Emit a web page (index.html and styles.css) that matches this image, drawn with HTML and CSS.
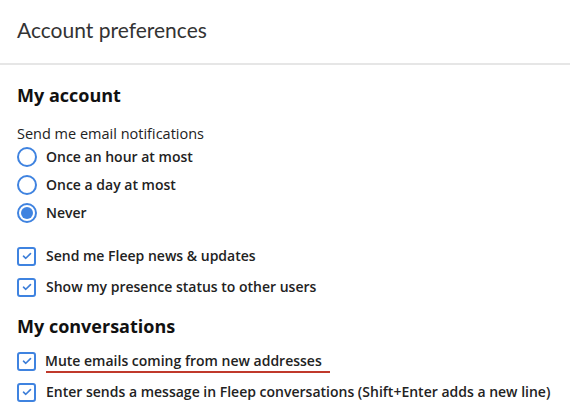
FILE: index.html
```html
<!DOCTYPE html>
<html>
<head>
<meta charset="utf-8">
<link rel="stylesheet" href="styles.css">
</head>
<body>
<div class="page">
  <header class="header"><h1 class="title">Account preferences</h1></header>
  <section class="section">
    <h2 class="section-title">My account</h2>
    <div class="label">Send me email notifications</div>
    <div class="radios">
      <label class="opt"><span class="radio"></span><span>Once an hour at most</span></label>
      <label class="opt"><span class="radio"></span><span>Once a day at most</span></label>
      <label class="opt"><span class="radio on"></span><span>Never</span></label>
    </div>
    <div class="checks">
      <label class="opt chk"><span class="box"><svg viewBox="0 0 10 8" width="10" height="8"><path d="M1.5 4.2 L3.8 6.3 L8.5 1.6" fill="none" stroke="#3b7dd8" stroke-width="1.6" stroke-linecap="round" stroke-linejoin="round"/></svg></span><span>Send me Fleep news &amp; updates</span></label>
      <label class="opt chk"><span class="box"><svg viewBox="0 0 10 8" width="10" height="8"><path d="M1.5 4.2 L3.8 6.3 L8.5 1.6" fill="none" stroke="#3b7dd8" stroke-width="1.6" stroke-linecap="round" stroke-linejoin="round"/></svg></span><span>Show my presence status to other users</span></label>
    </div>
  </section>
  <section class="section second">
    <h2 class="section-title">My conversations</h2>
    <div class="checks tight">
      <label class="opt chk"><span class="box"><svg viewBox="0 0 10 8" width="10" height="8"><path d="M1.5 4.2 L3.8 6.3 L8.5 1.6" fill="none" stroke="#3b7dd8" stroke-width="1.6" stroke-linecap="round" stroke-linejoin="round"/></svg></span><span class="marked">Mute emails coming from new addresses</span></label>
      <label class="opt chk"><span class="box"><svg viewBox="0 0 10 8" width="10" height="8"><path d="M1.5 4.2 L3.8 6.3 L8.5 1.6" fill="none" stroke="#3b7dd8" stroke-width="1.6" stroke-linecap="round" stroke-linejoin="round"/></svg></span><span>Enter sends a message in Fleep conversations (Shift+Enter adds a new line)</span></label>
    </div>
  </section>
</div>
</body>
</html>
```
FILE: styles.css
```css
html, body {
  margin: 0;
  padding: 0;
  background: #fff;
}
body {
  font-family: "Open Sans", "Liberation Sans", sans-serif;
  color: #222;
  font-size: 14px;
}
.page {
  width: 570px;
  height: 413px;
  overflow: hidden;
}
.header {
  height: 65px;
  border-bottom: 2px solid #e6e6e6;
  box-sizing: border-box;
  padding: 0 17px;
  display: flex;
  align-items: center;
}
.title {
  margin: 0;
  font-family: "Lato", "Open Sans", sans-serif;
  font-weight: 400;
  font-size: 21px;
  color: #333;
  position: relative;
  top: -2px;
}
.section {
  padding: 0 17px;
}
.section-title {
  margin: 0;
  font-size: 18px;
  font-weight: 700;
  color: #111;
  line-height: 24px;
  padding-top: 18px;
}
.second .section-title {
  padding-top: 17px;
}
.label {
  margin-top: 18px;
  line-height: 18px;
  font-size: 14.5px;
  font-weight: 500;
}
.radios {
  display: flex;
  flex-direction: column;
  gap: 8px;
  margin-top: 4px;
}
.opt {
  display: flex;
  align-items: center;
  gap: 9px;
  line-height: 20px;
  font-weight: 600;
  font-size: 14px;
  color: #222;
}
.radio {
  width: 20px;
  height: 20px;
  box-sizing: border-box;
  border: 2px solid #3f83e0;
  border-radius: 50%;
  flex: none;
  position: relative;
}
.radio.on::after {
  content: "";
  position: absolute;
  left: 2px;
  top: 2px;
  width: 12px;
  height: 12px;
  border-radius: 50%;
  background: #3f83e0;
}
.checks {
  display: flex;
  flex-direction: column;
  gap: 11px;
  margin-top: 23px;
}
.checks.tight {
  margin-top: 13px;
}
.box {
  width: 19px;
  height: 19px;
  box-sizing: border-box;
  border: 2px solid #3f83e0;
  border-radius: 3px;
  flex: none;
  display: flex;
  align-items: center;
  justify-content: center;
}
.chk {
  gap: 10px;
}
.marked {
  box-shadow: 0 5px 0 -3px #c0392b;
  padding: 0 11px 0 2px;
  margin-left: -3px;
}
```
